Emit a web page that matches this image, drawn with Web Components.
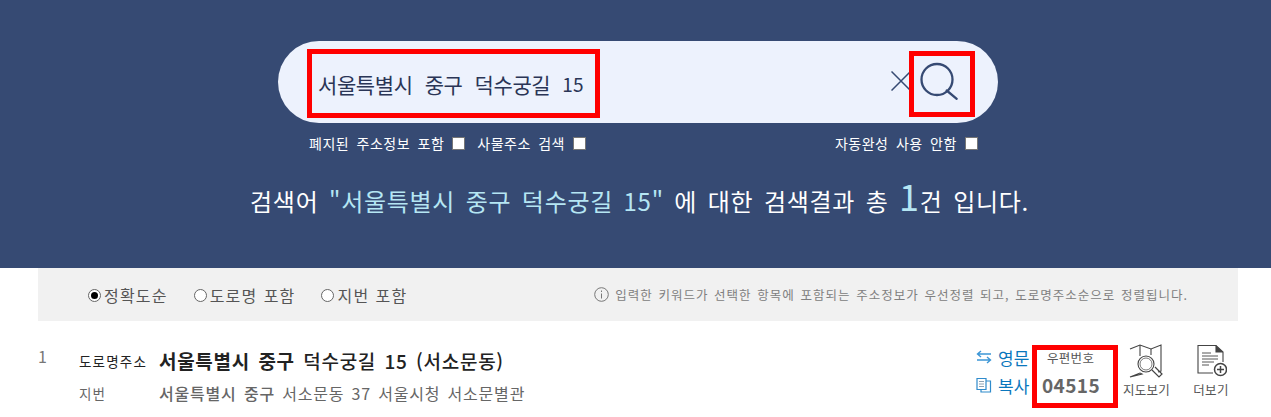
<!DOCTYPE html>
<html lang="ko">
<head>
<meta charset="utf-8">
<title>도로명주소 검색</title>
<style>
  html, body { margin: 0; padding: 0; background: #fff; }
  body { font-family: "Noto Sans CJK KR", "Open Sans", sans-serif; width: 1271px; height: 417px; overflow: hidden; }
</style>
</head>
<body>
<search-header></search-header>
<sort-bar></sort-bar>
<result-row></result-row>

<script>
class SearchHeader extends HTMLElement {
    constructor(){
        super();
        this.shadowDOM = this.attachShadow({mode:"open"});
    }
    connectedCallback() {
        this.render();
    }
    render() {
        this.shadowDOM.innerHTML = `
        <style>
            :host { display: block; height: 268px; background: #364a73; color: #fff; box-sizing: border-box; padding-top: 41px; }
            .pill {
                width: 720px; height: 82px; margin-left: 278px; background: #edf2fd; border-radius: 41px;
                display: flex; align-items: center; box-sizing: border-box; padding-left: 29px;
            }
            .query {
                width: 293px; height: 69px; box-sizing: border-box; border: 5px solid #f00; margin-top: 3px;
                display: flex; align-items: center; padding-left: 6px;
                font-size: 21px; color: #2a3556; white-space: pre; letter-spacing: -0.4px; word-spacing: 6.6px;
            }
            .query span { font-size: 19px; letter-spacing: 0; }
            .clear { margin: 0 0 3px 291px; width: 20px; height: 20px; display: block; flex: none; }
            .go {
                margin: 3px 0 0 -2px; width: 66px; height: 66px; box-sizing: border-box; border: 5px solid #f00; flex: none;
            }
            .go svg { display: block; }
            .opts { display: flex; height: 20px; margin: 10px 0 0 309px; font-size: 14px; line-height: 20px; white-space: nowrap; letter-spacing: 0.5px; word-spacing: 3px; }
            .opts label { display: flex; align-items: center; }
            .opts i { display: block; width: 11px; height: 11px; background: #fff; border: 1px solid #767676; margin-left: 8px; }
            .second { margin-left: 12px; }
            .third { margin-left: 249px; }
            .result { margin-top: 22px; padding-left: 8px; text-align: center; font-size: 24px; line-height: 40px; white-space: nowrap; letter-spacing: 0.7px; word-spacing: 3.2px; }
            .result em { font-style: normal; color: #b5e6f3; }
            .result b { font-weight: 400; font-size: 36px; color: #b5e6f3; }
        </style>
        <div class="pill">
            <div class="query">서울특별시 중구 덕수궁길 <span>15</span></div>
            <svg class="clear" viewBox="0 0 20 20" fill="none" stroke="#364a73" stroke-width="1.5"><path d="M.5 .5L19.5 19.5M19.5 .5L.5 19.5"/></svg>
            <div class="go">
                <svg width="56" height="56" viewBox="0 0 56 56" fill="none" stroke="#364a73" stroke-width="2.3"><circle cx="23" cy="23.5" r="15.5"/><path d="M32.7 34.5L42.7 42.8" stroke-linecap="round"/></svg>
            </div>
        </div>
        <div class="opts">
            <label>폐지된 주소정보 포함<i></i></label>
            <label class="second">사물주소 검색<i></i></label>
            <label class="third">자동완성 사용 안함<i></i></label>
        </div>
        <div class="result">검색어 <em>"서울특별시 중구 덕수궁길 15"</em> 에 대한 검색결과 총 <b>1</b>건 입니다.</div>
        `;
    }
}

class SortBar extends HTMLElement {
    constructor(){
        super();
        this.shadowDOM = this.attachShadow({mode:"open"});
    }
    connectedCallback() {
        this.render();
    }
    render() {
        this.shadowDOM.innerHTML = `
        <style>
            :host { display: flex; align-items: center; height: 53px; margin: 0 33px 0 38px; background: #f1f1f1; box-sizing: border-box; padding-left: 50px; white-space: nowrap; color: #555; }
            .opt { display: flex; align-items: center; font-size: 16px; letter-spacing: 1.2px; word-spacing: 0.5px; margin-right: 26px; }
            .dot { width: 11px; height: 11px; border: 1px solid #666; border-radius: 50%; background: #fff; margin: 2px 3px 0 0; display: flex; align-items: center; justify-content: center; }
            .dot.on::after { content: ""; width: 7px; height: 7px; border-radius: 50%; background: #000; }
            .note { display: flex; align-items: center; margin-left: auto; margin-right: 50px; font-size: 12.5px; letter-spacing: 1px; word-spacing: 1.2px; color: #808080; }
            .note svg { margin-right: 6px; }
        </style>
        <span class="opt"><span class="dot on"></span>정확도순</span>
        <span class="opt"><span class="dot"></span>도로명 포함</span>
        <span class="opt"><span class="dot"></span>지번 포함</span>
        <span class="note">
            <svg width="15" height="15" viewBox="0 0 15 15" fill="none" stroke="#777"><circle cx="7.5" cy="7.5" r="6.8"/><path d="M7.5 6.5V11.5M7.5 3.5V5"/></svg>
            입력한 키워드가 선택한 항목에 포함되는 주소정보가 우선정렬 되고, 도로명주소순으로 정렬됩니다.
        </span>
        `;
    }
}

class ResultRow extends HTMLElement {
    constructor(){
        super();
        this.shadowDOM = this.attachShadow({mode:"open"});
    }
    connectedCallback() {
        this.render();
    }
    render() {
        this.shadowDOM.innerHTML = `
        <style>
            :host { display: flex; padding: 24px 0 0 38px; color: #222; white-space: nowrap; }
            .num { width: 41px; font-size: 16px; color: #777; line-height: 22px; }
            .addr { width: 897px; }
            .line { display: flex; align-items: center; height: 32px; }
            .line .tag { width: 80px; font-size: 13.5px; letter-spacing: 1.2px; }
            .road { font-size: 19px; font-weight: 500; letter-spacing: 0.7px; word-spacing: 2.5px; margin-top: -2px; }
            .road b { font-weight: 700; }
            .old .tag { color: #666; }
            .old { color: #666; font-size: 16px; letter-spacing: 0.8px; word-spacing: 2px; }
            .old b { font-weight: 500; }
            .links { width: 57px; display: flex; flex-direction: column; gap: 4px; margin-top: 0; color: #0a77bd; font-size: 17px; }
            .links span { display: flex; align-items: center; gap: 6px; height: 24px; }
            .post {
                width: 86px; height: 63px; box-sizing: border-box; border: 5px solid #f00; margin-left: -1px;
                color: #666; padding-left: 5px;
            }
            .post small { display: block; font-size: 12.5px; line-height: 16px; padding: 0 0 0 5px; color: #555; letter-spacing: .3px; }
            .post strong { display: block; font-size: 19px; line-height: 30px; margin-top: 4px; letter-spacing: 0.4px; }
            .tool { display: flex; flex-direction: column; align-items: center; font-size: 12.5px; letter-spacing: .3px; color: #555; margin-top: -1px; line-height: 16px; }
            .map { width: 57px; }
            .more { width: 52px; margin-left: 10px; }
            .tool svg { display: block; margin-bottom: 2px; }
            .more svg { margin-right: 4px; }
        </style>
        <div class="num">1</div>
        <div class="addr">
            <div class="line"><span class="tag">도로명주소</span><span class="road"><b>서울특별시 중구</b> 덕수궁길 15 (서소문동)</span></div>
            <div class="line old"><span class="tag">지번</span><span><b>서울특별시 중구</b> 서소문동 37 서울시청 서소문별관</span></div>
        </div>
        <div class="links">
            <span><svg width="16" height="14" viewBox="0 0 16 14" fill="none" stroke="#3c96d6" stroke-width="1.4"><path d="M15 4H2M5 1L1.5 4L5 7M1 10H14M11 7L14.5 10L11 13"/></svg>영문</span>
            <span><svg width="16" height="16" viewBox="0 0 16 16" fill="none" stroke="#2f8bcc" stroke-width="1.2"><path d="M1 1.5H10V12.5H1Z"/><path d="M10 4H14.5V15H5V12.5"/><path d="M3 4.5H8M3 7H8M3 9.5H8" stroke="#8fa3b3" stroke-width="1"/></svg>복사</span>
        </div>
        <div class="post"><small>우편번호</small><strong>04515</strong></div>
        <div class="tool map">
            <svg width="38" height="36" viewBox="0 0 38 36" fill="none" stroke="#444" stroke-width="1.1"><path d="M2 5L12 1L23 5L33 1V27L30 28M14 30L12 29L2 33Z"/><path d="M12 1V12M23 5V11"/><circle cx="18" cy="20" r="8"/><circle cx="18" cy="20" r="6" stroke-width=".7"/><path d="M24 26L31 33L34 30L27 23" stroke-width="1.2"/></svg>
            지도보기
        </div>
        <div class="tool more">
            <svg width="36" height="36" viewBox="0 0 36 36" fill="none" stroke="#444" stroke-width="1.1"><path d="M22 29H7V1.5H25L32 8V18"/><path d="M25 1.5V8H32" fill="#444"/><path d="M11 9H20M11 12H27M11 15H27M11 18H23M11 21H18" stroke-width=".9"/><circle cx="29.5" cy="25.5" r="6" stroke-width="1.5"/><path d="M26 25.5H33M29.5 22V29" stroke-width="1.5"/></svg>
            더보기
        </div>
        `;
    }
}

customElements.define("search-header", SearchHeader);
customElements.define("sort-bar", SortBar);
customElements.define("result-row", ResultRow);
</script>
</body>
</html>
